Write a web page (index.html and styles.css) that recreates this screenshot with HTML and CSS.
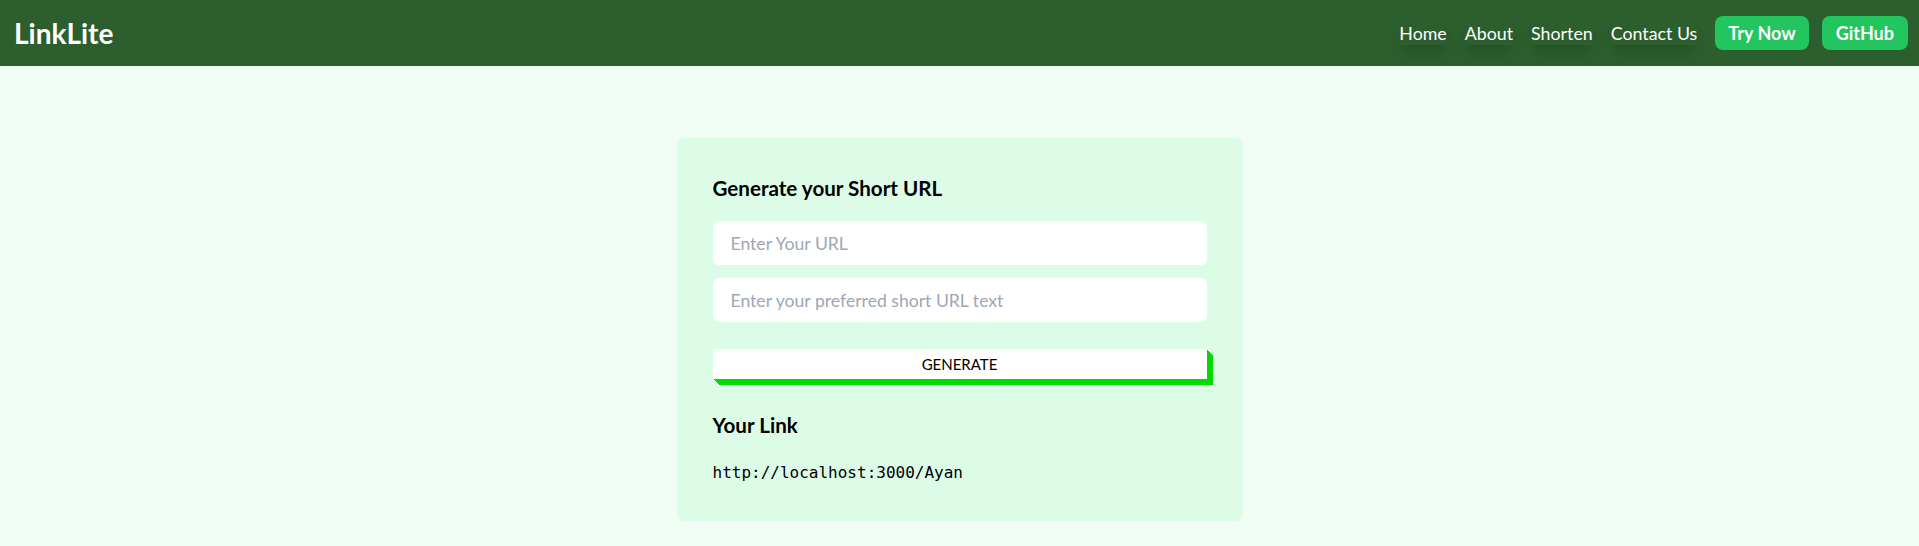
FILE: index.html
```html
<!DOCTYPE html>
<html lang="en">
<head>
<meta charset="utf-8">
<title>LinkLite</title>
<link rel="stylesheet" href="styles.css">
</head>
<body>
<header class="navbar">
  <div class="logo">LinkLite</div>
  <nav class="nav">
    <a class="nav-link" href="#">Home</a>
    <a class="nav-link" href="#">About</a>
    <a class="nav-link" href="#">Shorten</a>
    <a class="nav-link" href="#">Contact Us</a>
    <a class="nav-btn" href="#">Try Now</a>
    <a class="nav-btn" href="#">GitHub</a>
  </nav>
</header>
<main class="main">
  <section class="card">
    <h2 class="card-title">Generate your Short URL</h2>
    <div class="fields">
      <input class="field" type="text" placeholder="Enter Your URL">
      <input class="field" type="text" placeholder="Enter your preferred short URL text">
    </div>
    <button class="generate" type="button">GENERATE</button>
    <h3 class="card-title link-title">Your Link</h3>
    <code class="link">http://localhost:3000/Ayan</code>
  </section>
</main>
</body>
</html>
```

FILE: styles.css
```css
* { box-sizing: border-box; }
html, body { margin: 0; padding: 0; }
body {
  background: #f0fdf4;
  font-family: Lato, "Open Sans", sans-serif;
  color: #000;
  height: 546px;
  overflow: hidden;
}
.navbar {
  height: 66px;
  background: #2c5e2e;
  display: flex;
  align-items: center;
  justify-content: space-between;
  padding: 0 11px 0 14px;
}
.logo {
  color: #fff;
  font-weight: 700;
  font-size: 28px;
  line-height: 32px;
}
.nav {
  display: flex;
  align-items: center;
}
.nav-link {
  color: #fff;
  text-decoration: none;
  font-size: 17.8px;
  line-height: 24px;
  margin-right: 18px;
  box-shadow: 0 10px 15px -3px rgba(0,0,0,0.12), 0 4px 6px -4px rgba(0,0,0,0.12);
}
.nav-btn {
  color: #fff;
  text-decoration: none;
  font-size: 18px;
  font-weight: 700;
  height: 34px;
  line-height: 34px;
  padding: 0 13px;
  background: #22c55e;
  border-radius: 8px;
}
.nav-btn + .nav-btn { margin-left: 13px; padding: 0 14px; }
.main {
  display: flex;
  justify-content: center;
  padding-top: 72px;
}
.card {
  width: 566px;
  background: #dcfce7;
  border-radius: 8px;
  padding: 36px;
  display: flex;
  flex-direction: column;
}
.card-title {
  margin: 0 0 19px;
  font-size: 20.6px;
  line-height: 28px;
  font-weight: 700;
}
.fields {
  display: flex;
  flex-direction: column;
  gap: 13px;
}
.field {
  height: 44px;
  border: none;
  outline: none;
  border-radius: 6px;
  background: #fff;
  padding: 0 18px;
  font-family: inherit;
  font-size: 17.6px;
  color: #111;
}
.field::placeholder { color: #9ea6b8; }
.generate {
  margin-top: 27px;
  height: 30px;
  border: none;
  background: #fff;
  font-family: inherit;
  font-size: 15px;
  color: #000;
  padding: 0;
  box-shadow: 1px 1px 0 #00dc00, 2px 2px 0 #00dc00, 3px 3px 0 #00dc00,
              4px 4px 0 #00dc00, 5px 5px 0 #00dc00, 6px 6px 0 #00dc00;
}
.link-title { margin: 32px 0 0; }
.link {
  margin-top: 22px;
  font-family: "DejaVu Sans Mono", monospace;
  font-size: 16px;
  line-height: 24px;
}
```
